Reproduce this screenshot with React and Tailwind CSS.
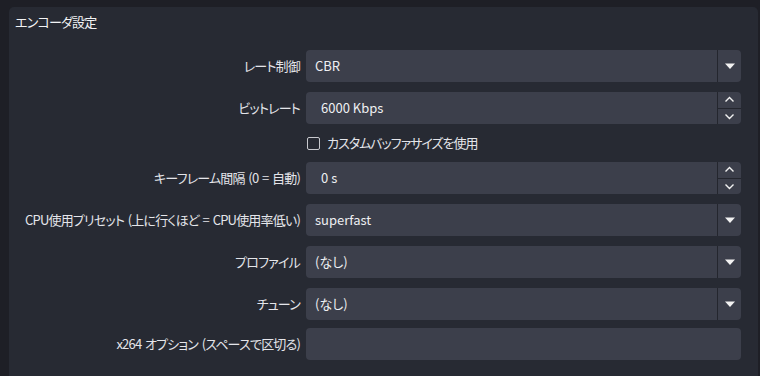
const font = {
  fontFamily: '"Noto Sans CJK JP", "Noto Sans", sans-serif',
};

const Label = ({ children }) => (
  <div className="w-[291px] shrink-0 whitespace-nowrap text-right text-[13px] tracking-[-0.8px] [word-spacing:1.5px] text-[#e4e5ea] [font-feature-settings:'palt']">
    {children}
  </div>
);

const Caret = () => (
  <div className="w-[24px] h-full flex items-center justify-center border-l border-[#24262e]">
    <svg width="12" height="7" viewBox="0 0 12 7">
      <path d="M1 0.5 H11 L6 6 Z" fill="#f2f2f2" />
    </svg>
  </div>
);

const Spin = () => (
  <div className="w-[24px] h-full flex flex-col border-l border-[#24262e]">
    <div className="flex-1 flex items-center justify-center border-b border-[#24262e]">
      <svg width="11" height="7" viewBox="0 0 11 7">
        <path d="M1.5 5.5 L5.5 1.5 L9.5 5.5" stroke="#f2f2f2" strokeWidth="1.4" fill="none" />
      </svg>
    </div>
    <div className="flex-1 flex items-center justify-center">
      <svg width="11" height="7" viewBox="0 0 11 7">
        <path d="M1.5 1.5 L5.5 5.5 L9.5 1.5" stroke="#f2f2f2" strokeWidth="1.4" fill="none" />
      </svg>
    </div>
  </div>
);

const Field = ({ label, value, kind, pad = "pl-[9px]" }) => (
  <div className="flex items-center h-[32px]">
    <Label>{label}</Label>
    <div className="flex-1 h-full mr-[17px] ml-[6px] rounded-[4px] bg-[#3c3f4b] flex items-center">
      <div className={`flex-1 ${pad} text-[13px] text-[#eeeff2] [font-feature-settings:'palt']`}>
        {value}
      </div>
      {kind === "select" && <Caret />}
      {kind === "spin" && <Spin />}
    </div>
  </div>
);

export default function App() {
  return (
    <div className="w-[760px] h-[376px] bg-[#1e1f26] pt-[7px] pl-[9px] overflow-hidden" style={font}>
      <div className="h-[380px] mr-[2px] rounded-t-[5px] bg-[#272a33] pt-[6px]">
        <div className="pl-[6px] text-[13px] tracking-[-0.8px] text-[#f2f3f5] [font-feature-settings:'palt'] leading-[18px]">
          エンコーダ設定
        </div>
        <div className="mt-[19px] flex flex-col">
          <Field label="レート制御" value="CBR" kind="select" />
          <div className="h-[10px]" />
          <Field label="ビットレート" value="6000 Kbps" kind="spin" pad="pl-[15px]" />
          <div className="h-[38px] flex items-center">
            <div className="w-[291px] shrink-0" />
            <div className="ml-[7px] w-[13px] h-[13px] rounded-[2px] border border-[#c8c9ce] bg-[#272a33]" />
            <div className="ml-[7px] text-[13px] tracking-[-1px] text-[#e4e5ea] [font-feature-settings:'palt']">
              カスタムバッファサイズを使用
            </div>
          </div>
          <Field label="キーフレーム間隔 (0 = 自動)" value="0 s" kind="spin" pad="pl-[15px]" />
          <div className="h-[10px]" />
          <Field label="CPU使用プリセット (上に行くほど = CPU使用率低い)" value="superfast" kind="select" />
          <div className="h-[10px]" />
          <Field label="プロファイル" value="(なし)" kind="select" />
          <div className="h-[10px]" />
          <Field label="チューン" value="(なし)" kind="select" />
          <div className="h-[8px]" />
          <Field label="x264 オプション (スペースで区切る)" value="" kind="text" />
        </div>
      </div>
    </div>
  );
}
